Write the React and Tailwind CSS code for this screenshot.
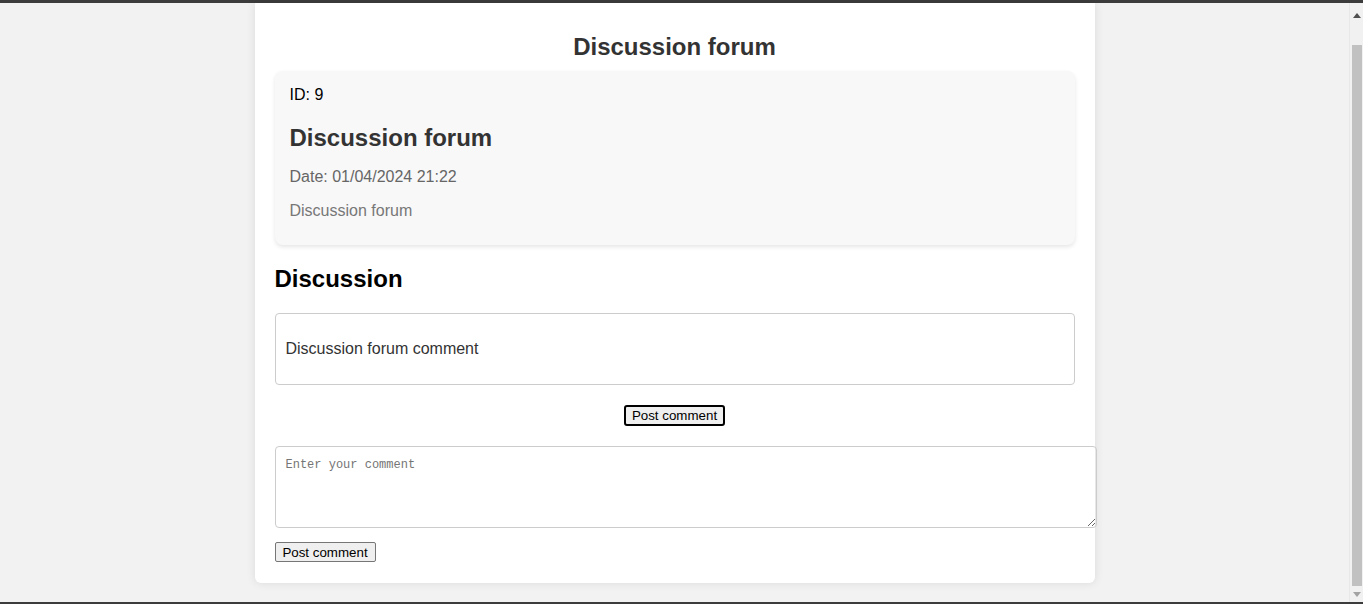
export default function App() {
  const sans = { fontFamily: '"Liberation Sans", Arial, sans-serif' };
  return (
    <div className="h-[604px] w-[1363px] overflow-hidden flex flex-col bg-[#f2f2f2]" style={sans}>
      <div className="h-[3px] bg-[#3c3c3c] shrink-0" />
      <div className="flex flex-1 min-h-0">
        <div className="flex-1 flex justify-center items-start">
          <div className="w-[840px] bg-white rounded-b-[6px] shadow-[0_0_10px_rgba(0,0,0,0.1)] px-5 pt-[30px] pb-[21px] flex flex-col">
            <h1 className="text-center text-[24px] leading-[28px] font-bold text-[#333]">Discussion forum</h1>
            <div className="mt-[10px] bg-[#f8f8f8] rounded-[8px] shadow-[0_2px_4px_rgba(0,0,0,0.1)] px-[15px] pt-[15px] pb-[25px]">
              <p className="text-[16px] leading-[18px] text-black">ID: 9</p>
              <h3 className="mt-[20px] text-[24px] leading-[28px] font-bold text-[#333]">Discussion forum</h3>
              <p className="mt-[16px] text-[16px] leading-[18px] text-[#666]">Date: 01/04/2024 21:22</p>
              <p className="mt-[16px] text-[16px] leading-[18px] text-[#777]">Discussion forum</p>
            </div>
            <h2 className="mt-[20px] text-[24px] leading-[28px] font-bold text-black">Discussion</h2>
            <div className="mt-[20px] h-[72px] shrink-0 border border-[#ccc] rounded-[4px] px-[10px] flex items-center">
              <p className="text-[16px] leading-[18px] text-[#333]">Discussion forum comment</p>
            </div>
            <div className="mt-[20px] flex justify-center">
              <button className="h-[21px] w-[101px] border-2 border-black rounded-[3px] bg-[#efefef] text-[13.33px] leading-[15px] text-black">Post comment</button>
            </div>
            <textarea
              className="mt-[20px] w-[822px] h-[82px] shrink-0 border border-[#ccc] rounded-[4px] px-[10px] pt-[11px] pb-[10px] text-[12px] leading-[14px] placeholder:text-[#757575] resize-y outline-none"
              style={{ fontFamily: '"Liberation Mono", "DejaVu Sans Mono", monospace' }}
              placeholder="Enter your comment"
            />
            <div className="mt-[14px] flex">
              <button className="h-[20px] w-[101px] border border-[#767676] rounded-[2px] bg-[#efefef] text-[13.33px] leading-[15px] text-black">Post comment</button>
            </div>
          </div>
        </div>
        <div className="w-[14px] bg-[#f1f1f1] border-l border-[#e8e8e8] flex flex-col items-center">
          <div className="h-[42px] flex items-start pt-[10px] justify-center">
            <svg width="8" height="5" viewBox="0 0 8 5"><path d="M4 0 L8 5 L0 5 Z" fill="#505050" /></svg>
          </div>
          <div className="w-[10px] ml-[1px] h-[541px] bg-[#c1c1c1]" />
          <div className="flex-1 flex items-center justify-center">
            <svg width="8" height="5" viewBox="0 0 8 5"><path d="M0 0 L8 0 L4 5 Z" fill="#a3a3a3" /></svg>
          </div>
        </div>
      </div>
      <div className="h-[2px] bg-[#3c3c3c] shrink-0" />
    </div>
  );
}
